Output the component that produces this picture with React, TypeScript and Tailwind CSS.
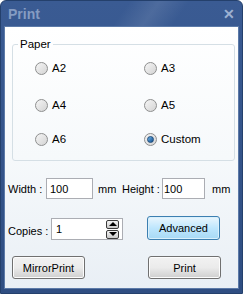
import React from "react"

function Radio({ label, checked }: { label: string; checked?: boolean }) {
  return (
    <label className="flex h-[14px] items-center gap-[4px] whitespace-nowrap">
      <span className="flex h-[13px] w-[13px] items-center justify-center rounded-full border border-[#8e8f8f] bg-gradient-to-br from-[#f5f5f5] to-[#d4d4d4]">
        {checked && (
          <span className="h-[7px] w-[7px] rounded-full border border-[#1d4a78] bg-gradient-to-br from-[#6fb4e8] to-[#0d4f8f]"></span>
        )}
      </span>
      <span>{label}</span>
    </label>
  )
}

function WinButton({ children, active }: { children: React.ReactNode; active?: boolean }) {
  return (
    <button
      className={
        active
          ? "h-[24px] w-[73px] rounded-[3px] border border-[#3c7fb1] bg-gradient-to-b from-[#eaf6fd] via-[#bee6fd] to-[#a7d9f5] text-[11px] text-black shadow-[inset_0_0_0_1px_#d9f0fc]"
          : "h-[23px] w-[73px] rounded-[3px] border border-[#707070] bg-gradient-to-b from-[#f2f2f2] via-[#ebebeb] to-[#cfcfcf] text-[11px] text-black shadow-[inset_0_0_0_1px_#fcfcfc]"
      }
    >
      {children}
    </button>
  )
}

export default function App() {
  return (
    <div
      className="flex h-[294px] w-[243px] flex-col overflow-hidden rounded-t-[6px] border border-[#24406c] bg-gradient-to-b from-[#3a5b93] to-[#2f4e82] text-[11px] leading-[14px] text-black"
      style={{ fontFamily: '"Liberation Sans", Arial, sans-serif' }}
    >
      {/* Title Bar */}
      <div className="relative flex h-[25px] shrink-0 items-center justify-between px-[7px]">
        <div className="absolute top-0 left-[120px] h-full w-[60px] -skew-x-[35deg] bg-gradient-to-r from-transparent via-white/10 to-transparent"></div>
        <span className="text-[14px] font-bold text-[#859cc2]">Print</span>
        <span className="text-[14px] font-bold leading-none text-[#9db1d1]">✕</span>
      </div>

      {/* Client Area */}
      <div className="mx-[3px] mb-[4px] flex flex-1 flex-col border border-[#5c7aa8] bg-gradient-to-b from-white via-[#f6f9fb] to-[#e9eff5] px-[3px]">
        {/* Paper Group */}
        <fieldset className="mt-[10px] ml-[4px] h-[124px] rounded-[3px] border border-[#d5dfe5] pl-[22px] text-[11.5px]">
          <legend className="ml-[-17px] px-[2px] leading-[14px]">Paper</legend>
          <div className="mt-[10px] flex">
            <div className="w-[109px]">
              <Radio label="A2" />
            </div>
            <Radio label="A3" />
          </div>
          <div className="mt-[23px] flex">
            <div className="w-[109px]">
              <Radio label="A4" />
            </div>
            <Radio label="A5" />
          </div>
          <div className="mt-[20px] flex">
            <div className="w-[109px]">
              <Radio label="A6" />
            </div>
            <Radio label="Custom" checked />
          </div>
        </fieldset>

        {/* Size Row */}
        <div className="mt-[17px] flex items-center whitespace-nowrap">
          <span className="w-[38px]">Width :</span>
          <input
            className="h-[21px] w-[47px] border border-[#abadb3] bg-white px-[3px] text-[11px] outline-none"
            defaultValue="100"
          />
          <span className="ml-[5px] w-[24px]">mm</span>
          <span className="w-[40px]">Height :</span>
          <input
            className="h-[21px] w-[43px] border border-[#abadb3] bg-white px-[1px] text-[11px] outline-none"
            defaultValue="100"
          />
          <span className="ml-[7px]">mm</span>
        </div>

        {/* Copies Row */}
        <div className="mt-[19px] flex items-center whitespace-nowrap">
          <span className="mt-[3px] w-[43px]">Copies :</span>
          <div className="flex h-[22px] w-[72px] items-center border border-[#abadb3] bg-white pr-[3px] pl-[4px]">
            <span className="flex-1">1</span>
            <div className="flex h-[19px] w-[13px] flex-col gap-[1px]">
              <div className="flex flex-1 items-center justify-center rounded-[2px] border border-[#3a3a3a] bg-gradient-to-b from-[#f4f4f4] to-[#c9c9c9]">
                <span className="h-0 w-0 border-x-[4px] border-b-[4px] border-x-transparent border-b-black"></span>
              </div>
              <div className="flex flex-1 items-center justify-center rounded-[2px] border border-[#3a3a3a] bg-gradient-to-b from-[#f4f4f4] to-[#c9c9c9]">
                <span className="h-0 w-0 border-x-[4px] border-t-[4px] border-x-transparent border-t-black"></span>
              </div>
            </div>
          </div>
          <div className="-mt-[3px] ml-[24px]">
            <WinButton active>Advanced</WinButton>
          </div>
        </div>

        {/* Action Buttons */}
        <div className="mt-[16px] flex gap-[63px] pl-[4px]">
          <WinButton>MirrorPrint</WinButton>
          <WinButton>Print</WinButton>
        </div>
      </div>
    </div>
  )
}
